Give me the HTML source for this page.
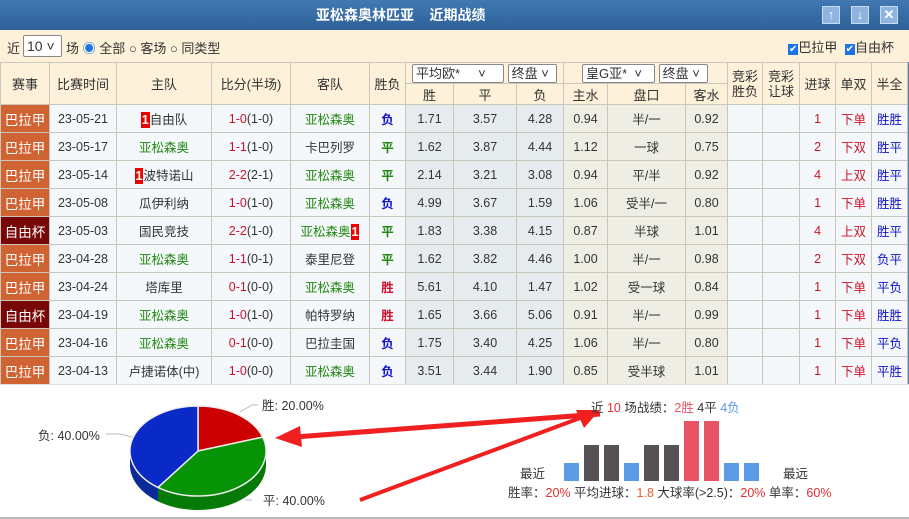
<!DOCTYPE html>
<html><head><meta charset="utf-8"><style>
*{margin:0;padding:0;box-sizing:border-box}
body{width:909px;height:519px;overflow:hidden;background:#fff;font-family:"Liberation Sans","Noto Sans CJK SC",sans-serif;font-size:12px;color:#333;position:relative}
.title{position:absolute;left:0;top:0;width:909px;height:30px;background:linear-gradient(#4279b2,#2d6098);color:#fff;font-weight:bold;font-size:14px;line-height:30px}
.title span{position:absolute;left:316px}
.btn{position:absolute;top:6px;width:18px;height:18px;background:#8fb4e0;border:1px solid #c8dcf2;color:#fff;font-size:13px;text-align:center;line-height:16px;font-weight:bold}
.bar{position:absolute;left:0;top:30px;width:909px;height:32px;background:#fdf1d9;font-size:13px}
table{position:absolute;left:0;top:62px;border-collapse:collapse;table-layout:fixed;width:907px}
td{border:1px solid #cbc6bd;text-align:center;height:28px;font-size:12.5px;padding:0;white-space:nowrap;overflow:hidden}
thead td{background:#fdf1d9;height:21px;font-size:13px}
tbody td{background:#f4f8fb}
td.o{background:#e6ecee}
td.a{background:#efeee4}
td.l{color:#fff;background:#cf6332;font-size:13.5px}
td.c{background:#780808}
.g{color:#228811}.r{color:#d0112b}.b{color:#1010cc}.bl{color:#1010cc}
td.w{font-weight:bold}
.rc{background:#e00;color:#fff;padding:0 1px;font-size:12.5px;font-weight:bold;line-height:16px;display:inline-block}
.sel{display:inline-block;border:1px solid #888;background:#fff;height:19px;line-height:17px;padding:0 3px;text-align:left;border-radius:2px;font-size:13px}
.bottom{position:absolute;left:0;top:384px;width:909px;height:135px;border-top:1px solid #ddd;border-bottom:2px solid #bbb}
.rb{position:absolute;right:0;top:62px;width:2px;height:322px;background:#5577aa}
</style></head><body>
<div class="title"><span>亚松森奥林匹亚&nbsp;&nbsp;&nbsp;&nbsp;近期战绩</span>
<div class="btn" style="left:822px">↑</div><div class="btn" style="left:851px">↓</div><div class="btn" style="left:880px">✕</div></div>
<div class="bar">
<span style="position:absolute;left:7px;top:8px">近</span>
<span class="sel" style="position:absolute;left:23px;top:5px;width:39px;height:22px;line-height:20px;font-size:14px">10 ˅</span>
<span style="position:absolute;left:66px;top:8px">场 <span style="color:#1a73e8">◉</span> 全部 ○ 客场 ○ 同类型</span>
<span style="position:absolute;left:788px;top:7px"><span style="background:#1a73e8;color:#fff;font-size:10px;padding:0 1px">✔</span>巴拉甲 &nbsp;<span style="background:#1a73e8;color:#fff;font-size:10px;padding:0 1px">✔</span>自由杯</span>
</div>
<div class="rb"></div>
<table>
<colgroup><col style="width:49px"><col style="width:67px"><col style="width:95px"><col style="width:79px"><col style="width:79px"><col style="width:36px"><col style="width:48px"><col style="width:63px"><col style="width:47px"><col style="width:44px"><col style="width:78px"><col style="width:42px"><col style="width:35px"><col style="width:37px"><col style="width:36px"><col style="width:36px"><col style="width:36px"></colgroup>
<thead>
<tr><td rowspan="2">赛事</td><td rowspan="2">比赛时间</td><td rowspan="2">主队</td><td rowspan="2">比分(半场)</td><td rowspan="2">客队</td><td rowspan="2">胜负</td>
<td colspan="3" style="text-align:left;padding-left:6px"><span class="sel" style="width:92px">平均欧* &nbsp;&nbsp;&nbsp;&nbsp;˅</span> <span class="sel" style="width:49px">终盘 ˅</span></td>
<td colspan="3" style="text-align:left;padding-left:18px"><span class="sel" style="width:73px">皇G亚* &nbsp;˅</span> <span class="sel" style="width:49px">终盘 ˅</span></td>
<td rowspan="2" style="line-height:15px">竞彩<br>胜负</td><td rowspan="2" style="line-height:15px">竞彩<br>让球</td><td rowspan="2">进球</td><td rowspan="2">单双</td><td rowspan="2">半全</td></tr>
<tr><td>胜</td><td>平</td><td>负</td><td>主水</td><td>盘口</td><td>客水</td></tr>
</thead>
<tbody>
<tr><td class="l">巴拉甲</td><td>23-05-21</td><td><span class="rc">1</span>自由队</td><td><span class="r">1-0</span>(1-0)</td><td class="g">亚松森奥</td><td class="b w">负</td><td class="o">1.71</td><td class="o">3.57</td><td class="o">4.28</td><td class="a">0.94</td><td class="a">半/一</td><td class="a">0.92</td><td></td><td></td><td class="r">1</td><td class="r">下单</td><td class="bl">胜胜</td></tr>
<tr><td class="l">巴拉甲</td><td>23-05-17</td><td class="g">亚松森奥</td><td><span class="r">1-1</span>(1-0)</td><td>卡巴列罗</td><td class="g w">平</td><td class="o">1.62</td><td class="o">3.87</td><td class="o">4.44</td><td class="a">1.12</td><td class="a">一球</td><td class="a">0.75</td><td></td><td></td><td class="r">2</td><td class="r">下双</td><td class="bl">胜平</td></tr>
<tr><td class="l">巴拉甲</td><td>23-05-14</td><td><span class="rc">1</span>波特诺山</td><td><span class="r">2-2</span>(2-1)</td><td class="g">亚松森奥</td><td class="g w">平</td><td class="o">2.14</td><td class="o">3.21</td><td class="o">3.08</td><td class="a">0.94</td><td class="a">平/半</td><td class="a">0.92</td><td></td><td></td><td class="r">4</td><td class="r">上双</td><td class="bl">胜平</td></tr>
<tr><td class="l">巴拉甲</td><td>23-05-08</td><td>瓜伊利纳</td><td><span class="r">1-0</span>(1-0)</td><td class="g">亚松森奥</td><td class="b w">负</td><td class="o">4.99</td><td class="o">3.67</td><td class="o">1.59</td><td class="a">1.06</td><td class="a">受半/一</td><td class="a">0.80</td><td></td><td></td><td class="r">1</td><td class="r">下单</td><td class="bl">胜胜</td></tr>
<tr><td class="l c">自由杯</td><td>23-05-03</td><td>国民竞技</td><td><span class="r">2-2</span>(1-0)</td><td class="g">亚松森奥<span class="rc">1</span></td><td class="g w">平</td><td class="o">1.83</td><td class="o">3.38</td><td class="o">4.15</td><td class="a">0.87</td><td class="a">半球</td><td class="a">1.01</td><td></td><td></td><td class="r">4</td><td class="r">上双</td><td class="bl">胜平</td></tr>
<tr><td class="l">巴拉甲</td><td>23-04-28</td><td class="g">亚松森奥</td><td><span class="r">1-1</span>(0-1)</td><td>泰里尼登</td><td class="g w">平</td><td class="o">1.62</td><td class="o">3.82</td><td class="o">4.46</td><td class="a">1.00</td><td class="a">半/一</td><td class="a">0.98</td><td></td><td></td><td class="r">2</td><td class="r">下双</td><td class="bl">负平</td></tr>
<tr><td class="l">巴拉甲</td><td>23-04-24</td><td>塔库里</td><td><span class="r">0-1</span>(0-0)</td><td class="g">亚松森奥</td><td class="r w">胜</td><td class="o">5.61</td><td class="o">4.10</td><td class="o">1.47</td><td class="a">1.02</td><td class="a">受一球</td><td class="a">0.84</td><td></td><td></td><td class="r">1</td><td class="r">下单</td><td class="bl">平负</td></tr>
<tr><td class="l c">自由杯</td><td>23-04-19</td><td class="g">亚松森奥</td><td><span class="r">1-0</span>(1-0)</td><td>帕特罗纳</td><td class="r w">胜</td><td class="o">1.65</td><td class="o">3.66</td><td class="o">5.06</td><td class="a">0.91</td><td class="a">半/一</td><td class="a">0.99</td><td></td><td></td><td class="r">1</td><td class="r">下单</td><td class="bl">胜胜</td></tr>
<tr><td class="l">巴拉甲</td><td>23-04-16</td><td class="g">亚松森奥</td><td><span class="r">0-1</span>(0-0)</td><td>巴拉圭国</td><td class="b w">负</td><td class="o">1.75</td><td class="o">3.40</td><td class="o">4.25</td><td class="a">1.06</td><td class="a">半/一</td><td class="a">0.80</td><td></td><td></td><td class="r">1</td><td class="r">下单</td><td class="bl">平负</td></tr>
<tr><td class="l">巴拉甲</td><td>23-04-13</td><td>卢捷诺体(中)</td><td><span class="r">1-0</span>(0-0)</td><td class="g">亚松森奥</td><td class="b w">负</td><td class="o">3.51</td><td class="o">3.44</td><td class="o">1.90</td><td class="a">0.85</td><td class="a">受半球</td><td class="a">1.01</td><td></td><td></td><td class="r">1</td><td class="r">下单</td><td class="bl">平胜</td></tr>
</tbody></table>
<div class="bottom"></div>
<svg width="909" height="519" style="position:absolute;left:0;top:0">
<path d="M130 451 L130 465 A68 45 0 0 0 158 501.4 L158 487.4 A68 45 0 0 1 130 451Z" fill="#0a2a9a"/>
<path d="M158 487.4 L158 501.4 A68 45 0 0 0 266 465 L266 451 A68 45 0 0 1 158 487.4Z" fill="#067a06"/>
<path d="M198 451 L198 406 A68 45 0 0 1 262.7 437.1Z" fill="#cc0000" stroke="#eee" stroke-width="1.5"/>
<path d="M198 451 L262.7 437.1 A68 45 0 0 1 158 487.4Z" fill="#069406" stroke="#eee" stroke-width="1.5"/>
<path d="M198 451 L158 487.4 A68 45 0 0 1 198 406Z" fill="#0a2ac8" stroke="#eee" stroke-width="1.5"/>
<polyline points="240,412 252,405 258,405" fill="none" stroke="#bbb"/>
<polyline points="106,434 120,434 132,437" fill="none" stroke="#bbb"/>
<polyline points="245,500 252,500" fill="none" stroke="#bbb"/>
<text x="262" y="410" font-size="12.5" fill="#333">胜: 20.00%</text>
<text x="38" y="440" font-size="12.5" fill="#333">负: 40.00%</text>
<text x="263" y="505" font-size="12.5" fill="#333">平: 40.00%</text>
<line x1="600" y1="414" x2="295" y2="437" stroke="#f02020" stroke-width="5"/>
<polygon points="275,438 300,426 302,447" fill="#f02020"/>
<line x1="360" y1="500" x2="580" y2="418" stroke="#f02020" stroke-width="4"/>
<polygon points="600,410 576,410 584,428" fill="#f02020"/>
<g>
<rect x="564" y="463" width="15" height="18" fill="#5b9be6"/>
<rect x="584" y="445" width="15" height="36" fill="#555155"/>
<rect x="604" y="445" width="15" height="36" fill="#555155"/>
<rect x="624" y="463" width="15" height="18" fill="#5b9be6"/>
<rect x="644" y="445" width="15" height="36" fill="#555155"/>
<rect x="664" y="445" width="15" height="36" fill="#555155"/>
<rect x="684" y="421" width="15" height="60" fill="#e85466"/>
<rect x="704" y="421" width="15" height="60" fill="#e85466"/>
<rect x="724" y="463" width="15" height="18" fill="#5b9be6"/>
<rect x="744" y="463" width="15" height="18" fill="#5b9be6"/>
</g>
<text x="591" y="412" font-size="12.5" fill="#333">近 <tspan fill="#e03030">10</tspan> 场战绩：<tspan fill="#e85466">2胜</tspan> 4平 <tspan fill="#5b9be6">4负</tspan></text>
<text x="520" y="478" font-size="12.5" fill="#333">最近</text>
<text x="783" y="478" font-size="12.5" fill="#333">最远</text>
<text x="508" y="497" font-size="12.5" fill="#333">胜率：<tspan fill="#e03030">20%</tspan> 平均进球：<tspan fill="#e06030">1.8</tspan> 大球率(&gt;2.5)：<tspan fill="#e03030">20%</tspan> 单率：<tspan fill="#e03030">60%</tspan></text>
</svg>
</body></html>
